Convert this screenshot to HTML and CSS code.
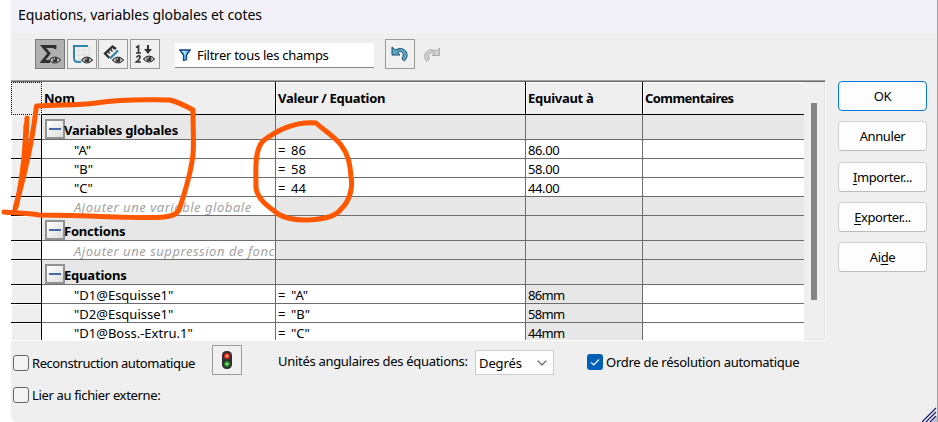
FILE: index.html
```html
<!DOCTYPE html>
<html lang="fr">
<head>
<meta charset="utf-8">
<title>Equations, variables globales et cotes</title>
<link rel="stylesheet" href="styles.css">
</head>
<body>
<svg class="defs" width="0" height="0" aria-hidden="true">
  <symbol id="eye" viewBox="0 0 12 10">
    <path d="M0.6 5.2Q6-1.2 11.4 5.2Q6 10.8 0.6 5.2Z" fill="#f4f4f4" stroke="#333" stroke-width="1.2"/>
    <circle cx="6" cy="4.8" r="2.5" fill="#333"/><circle cx="5.2" cy="3.9" r=".8" fill="#ddd"/>
  </symbol>
</svg>
<div class="dialog">
  <header class="title">Equations, variables globales et cotes</header>
  <div class="toolbar">
    <button class="tool active"><svg width="28" height="28" viewBox="0 0 28 28"><path d="M19 9V6.500H7L13 13.500L6.500 21.500H14" fill="none" stroke="#303030" stroke-width="2.800"/><use href="#eye" x="13" y="15" width="12" height="10"/></svg></button>
    <button class="tool"><svg width="28" height="28" viewBox="0 0 28 28"><path d="M11 5V22M16 5V22M21 5V22M6 10H24M6 15H24M6 20H20" stroke="#ddd"/><path d="M20 6H6V18Q6 22 10 22H13" fill="none" stroke="#2f85aa" stroke-width="2"/><use href="#eye" x="13" y="15" width="12" height="10"/></svg></button>
    <button class="tool"><svg width="28" height="28" viewBox="0 0 28 28"><path d="M10.500 18L6 13.500L13.500 6.500L17 9" fill="none" stroke="#333" stroke-width="2.400"/><path d="M8 11L11 13.500M10.500 8.500L13.500 11.500M13.500 6.500L15.500 9" stroke="#333" stroke-width="1.500"/><path d="M11 18.500L19 10.500" stroke="#2f85aa" stroke-width="2.300"/><use href="#eye" x="13" y="15" width="12" height="10"/></svg></button>
    <button class="tool"><svg width="28" height="28" viewBox="0 0 28 28"><path d="M5 7.500L7.500 6V13M5 13H10M5.500 17.500Q7.500 14.500 9 16.500Q9.500 18.500 5.500 22H10" fill="none" stroke="#333" stroke-width="1.700"/><path d="M17 5V10" stroke="#333" stroke-width="2"/><path d="M13 9H21L17 14Z" fill="#333"/><use href="#eye" x="12" y="14" width="12" height="10"/></svg></button>
    <div class="filter"><svg width="12" height="12" viewBox="0 0 12 12"><path d="M.8 1H11.200L7.500 6V10.500L4.500 11.500V6Z" fill="#62c5ea" stroke="#173f8c" stroke-width="1.300"/><path d="M3 2.500H6V6" stroke="#d4f2ff" fill="none"/></svg><span>Filtrer tous les champs</span></div>
    <button class="tool undo"><svg width="28" height="28" viewBox="0 0 28 28"><path d="M6 7V15H14L11.500 12.500C16 10 19 13 16 19L18.500 21C25 14 18 5 9.500 10Z" fill="#5aa7ca" stroke="#1d4d68" stroke-width="1"/></svg></button>
    <svg class="redo" width="18" height="18" viewBox="0 0 18 18"><path d="M16.500 2V9.500H9L11.500 7C7 5.500 4 8.500 6.500 13L4 15.500C-2 9 5 .5 13.500 5Z" fill="#d0d0d0" stroke="#aaa"/></svg>
  </div>
  <div class="main">
    <div class="table">
      <div class="grid">
        <div class="row head"><div class="gut"></div><div>Nom</div><div>Valeur / Equation</div><div>Equivaut à</div><div class="tight">Commentaires</div></div>
        <div class="row cat"><div class="gut"></div><div><i class="minus"></i><span>Variables globales</span></div><div></div><div></div><div></div></div>
        <div class="row"><div class="gut"></div><div class="name">"A"</div><div class="val"><b>=</b>86</div><div class="num">86.00</div><div></div></div>
        <div class="row"><div class="gut"></div><div class="name">"B"</div><div class="val"><b>=</b>58</div><div class="num">58.00</div><div></div></div>
        <div class="row"><div class="gut"></div><div class="name">"C"</div><div class="val"><b>=</b>44</div><div class="num">44.00</div><div></div></div>
        <div class="row add"><div class="gut"></div><div class="name">Ajouter une variable globale</div><div></div><div></div><div></div></div>
        <div class="row cat"><div class="gut"></div><div><i class="minus"></i><span>Fonctions</span></div><div></div><div></div><div></div></div>
        <div class="row add"><div class="gut"></div><div class="name">Ajouter une suppression de fonction</div><div></div><div></div><div></div></div>
        <div class="row cat"><div class="gut"></div><div><i class="minus"></i><span>Equations</span></div><div></div><div></div><div></div></div>
        <div class="row eq"><div class="gut"></div><div class="name">"D1@Esquisse1"</div><div class="val"><b>=</b>"A"</div><div class="num">86mm</div><div></div></div>
        <div class="row eq"><div class="gut"></div><div class="name">"D2@Esquisse1"</div><div class="val"><b>=</b>"B"</div><div class="num">58mm</div><div></div></div>
        <div class="row eq"><div class="gut"></div><div class="name">"D1@Boss.-Extru.1"</div><div class="val"><b>=</b>"C"</div><div class="num">44mm</div><div></div></div>
      </div>
      <div class="scroll"><div class="thumb"></div></div>
    </div>
    <div class="actions"><button class="ok">OK</button><button>Annuler</button><button><span><u>I</u>mporter...</span></button><button><span><u>E</u>xporter...</span></button><button><span>Ai<u>d</u>e</span></button></div>
  </div>
  <div class="options">
    <label class="rebuild"><i class="box"></i><span>Reconstruction automatique</span></label>
    <button class="tool light"><svg width="28" height="28" viewBox="0 0 28 28"><rect x="9" y="5" width="10" height="18" rx="4.500" fill="#30302e"/><circle cx="14" cy="10" r="3" fill="#d92812"/><circle cx="14" cy="18" r="3" fill="#218526"/><path d="M12.500 10H15.500M14 8.500V11.500" stroke="#ffc0ae"/><path d="M12.500 18H15.500M14 16.500V19.500" stroke="#b9f5ae"/></svg></button>
    <span class="units">Unités angulaires des équations:</span>
    <div class="select"><span>Degrés</span><svg width="10" height="6" viewBox="0 0 10 6"><path d="M.7.7L5 5L9.300.7" fill="none" stroke="#555" stroke-width="1.100"/></svg></div>
    <label class="order"><i class="box checked"><svg width="16" height="16" viewBox="0 0 16 16"><path d="M4 8.300L6.800 11L12 5.500" fill="none" stroke="#fff" stroke-width="1.100"/></svg></i><span>Ordre de résolution automatique</span></label>
  </div>
  <label class="link"><i class="box"></i><span>Lier au fichier externe:</span></label>
</div>
<svg class="grip" width="16" height="16" viewBox="0 0 16 16"><path d="M16 10V16H10Z" fill="#c4c4cc"/><path d="M1 16L15 2M5 16L15 6M9 16L15 10" stroke="#17177c" stroke-width="1.200"/></svg>
<svg class="ink" width="938" height="422" viewBox="0 0 938 422"><g fill="none" stroke="#ff5600" stroke-width="5" stroke-linecap="round" stroke-linejoin="round"><path d="M27 118C26 150 23 184 15 209C24 177 31 149 35 117L36.500 106C57 104 75 106 96 103C130 98 151 100 170 100C177 102 186 106 193 110C193 128 194 145 193 154C191 174 184 195 180 207C178 214 173 216 164 217C145 219 83 215 39 215C27 213 15 213 4 212"/><path d="M26 125C25 153 22 182 16 207"/><path d="M316 123C293 121 276 131 263 141C254 151 256 170 256 188C258 201 271 208 278 214C293 223 332 222 341 209C350 201 353 187 351 177C350 163 348 154 341 145C334 136 326 132 316 123Z"/></g></svg>
</body>
</html>
```
FILE: styles.css
```css
* { box-sizing: border-box; }
body { margin: 0; width: 938px; height: 422px; overflow: hidden; background: #fff; font: 13px/18px "Noto Sans", sans-serif; color: #000; position: relative; }
button { font: inherit; color: inherit; padding: 0; }
.defs { position: absolute; }
.dialog { margin-left: 11px; width: 927px; height: 422px; background: #efefef; border-right: 1px solid #a5a5a5; border-bottom-left-radius: 6px; }
.title { height: 33px; padding: 5px 7px; background: #f3f1f8; font-size: 14px; line-height: 20px; letter-spacing: -.05px; white-space: nowrap; }
.toolbar { height: 47px; padding: 6px 0 0 24px; display: flex; align-items: flex-start; }
.tool { width: 30px; height: 30px; border: 1px solid #999; background: #f0f0f0; margin-right: 2px; flex: none; }
.tool svg { display: block; }
.tool:nth-child(2) { margin-right: 1px; }
.tool.active { background: #b0b0b0; border-color: #777; }
.filter { width: 199px; height: 25px; margin: 4px 11px 0 13px; padding-left: 4px; display: flex; align-items: center; gap: 6px; background: #fff; border-bottom: 1px solid #888; white-space: nowrap; letter-spacing: -.27px; }
.redo { margin: 7px 0 0 6px; }
.main { display: flex; height: 261px; }
.table { width: 815px; height: 261px; border-top: 1px solid #a0a0a0; border-right: 1px solid #fff; border-bottom: 1px solid #fff; display: flex; box-shadow: inset 0 1px #696969, inset -1px -1px #e1e1e1; padding-top: 1px; }
.grid { width: 793px; height: 258px; overflow: hidden; }
.row { display: grid; grid-template-columns: 31px 234px 250px 117px 161px; height: 19px; }
.row > div { border-right: 1px solid #6c6c6c; border-bottom: 1px solid #6c6c6c; background: #fff; padding-left: 2px; overflow: hidden; white-space: nowrap; line-height: 20px; }
.row > div:last-child { border-right: 0; }
.row > .gut { background: #efefef; border-color: #000; box-shadow: inset 1px 1px #fff; }
.row.head { height: 33px; }
.row.head > div { border-color: #000; background: #efefef; font-weight: bold; line-height: 32px; letter-spacing: -.27px; box-shadow: inset 1px 1px #fff; }
.row.head > .tight { letter-spacing: -.55px; }
.row.head > .gut { border: 1px dotted #000; box-shadow: none; }
.row.cat { height: 25px; font-weight: bold; letter-spacing: -.2px; }
.row.cat > div:not(.gut), .row.add > div:nth-child(n+3), .row.eq > div:nth-child(4) { background: #e7e7e7; }
.row.cat > div:nth-child(2) { display: flex; line-height: 30px; }
.minus { width: 20px; height: 20px; margin: 4px -1px 0 1px; flex: none; border: 2px solid #929292; background: linear-gradient(#4868a8, #4868a8) center / 12px 2px no-repeat, linear-gradient(135deg, #fff, #ddd); }
.row > .name { padding-left: 32px; }
.row.add > .name { color: #a3a3a3; font-style: italic; letter-spacing: .53px; }
.row > .num { letter-spacing: -.4px; }
.row.eq > .num { letter-spacing: -.7px; }
.val b { display: inline-block; width: 13px; font-weight: normal; }
.scroll { width: 20px; padding: 21px 0 0 7px; }
.thumb { width: 6px; height: 197px; background: #858585; }
.actions { padding: 1px 0 0 12px; display: flex; flex-direction: column; gap: 10px; }
.actions button { width: 89px; height: 30px; border: 1px solid #d0d0d0; border-bottom-color: #bbb; border-radius: 4px; background: #fdfdfd; letter-spacing: -.4px; }
.actions button:nth-child(3) { margin-top: 1px; }
.actions .ok { border-color: #0078d4; }
u { text-underline-offset: 2px; }
.options { display: flex; height: 44px; padding: 4px 0 0 2px; align-items: flex-start; white-space: nowrap; }
label { display: flex; align-items: center; gap: 3px; white-space: nowrap; }
.box { width: 16px; height: 16px; border: 1px solid #666; border-radius: 3px; background: #f4f4f4; flex: none; }
.box svg { display: block; }
.box.checked { background: #0060b8; border: 0; }
.rebuild { width: 199px; margin-top: 9px; letter-spacing: -.43px; }
.units { width: 196px; margin: 7px 0 0 35px; letter-spacing: -.3px; }
.select { width: 79px; height: 25px; margin: 5px 0 0 1px; padding: 0 6px 0 3px; display: flex; align-items: center; justify-content: space-between; background: #fdfdfd; border: 1px solid #ccc; letter-spacing: -.1px; }
.order { margin: 8px 0 0 33px; letter-spacing: -.27px; }
.link { margin: 1px 0 0 2px; letter-spacing: -.35px; }
.grip { position: absolute; right: 1px; bottom: 0; }
.ink { position: absolute; left: 0; top: 0; pointer-events: none; }
```
